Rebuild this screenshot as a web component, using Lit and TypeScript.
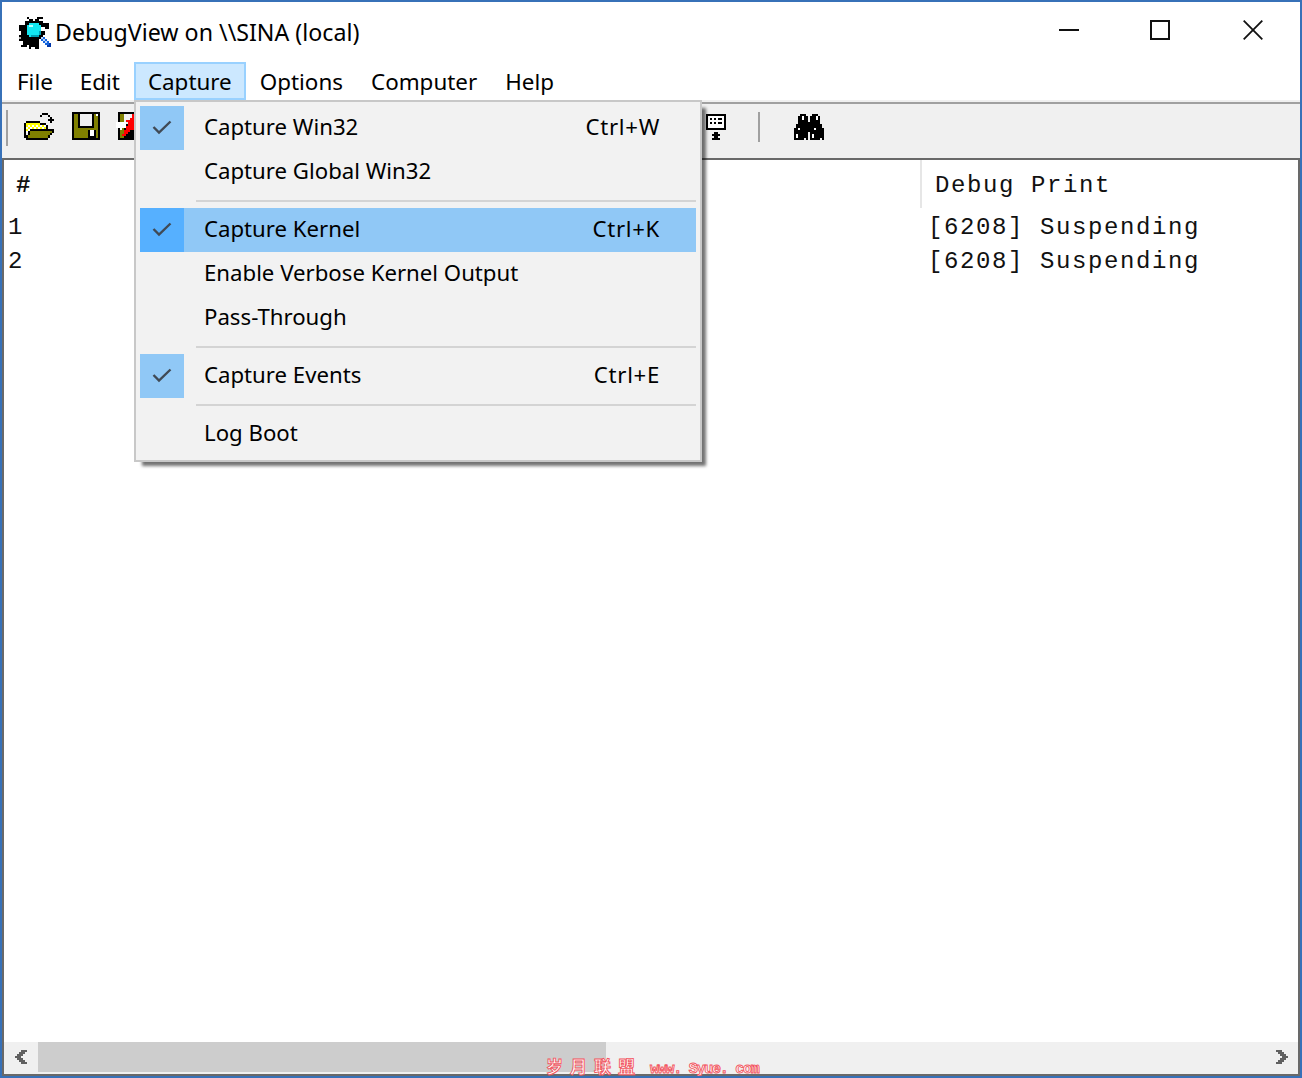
import { LitElement, html, css, svg } from "lit";
import { customElement } from "lit/decorators.js";

type Rect = [number, number, number, number, string];
const pixels = (w: number, h: number, rects: Rect[], cls: string) => html`<svg class=${cls} width=${w} height=${h} viewBox="0 0 ${w} ${h}" shape-rendering="crispEdges">${rects.map(
  ([x, y, rw, rh, f]) => svg`<rect x=${x} y=${y} width=${rw} height=${rh} fill=${f}></rect>`
)}</svg>`;

const K = "#000", O = "#808000", Y = "#ffff00", W = "#fff", C = "#12e6f0", B = "#1464dc", R = "#ff0000", G = "#b0b0b0", L = "#f0f0f0";

const bugIcon = pixels(32, 32, [
  [8,0,2,2,K],[10,2,4,4,K],[18,0,6,2,K],[16,2,4,4,K],[6,4,18,4,K],[22,6,8,4,K],[26,10,4,2,K],
  [0,8,10,6,K],[2,14,8,4,K],[0,18,10,6,K],[4,24,6,4,K],[2,28,6,2,K],[0,20,2,2,G],
  [8,16,16,6,K],[10,22,10,6,K],[12,28,6,2,K],[10,28,2,4,K],[16,28,4,4,K],[22,14,4,4,K],
  [10,6,10,2,C],[8,8,14,10,C],[10,18,10,2,C],[10,8,4,2,"#b0ffff"],[20,14,2,4,"#00a0b4"],[12,18,8,2,"#00a0b4"],
  [20,18,4,2,K],[22,20,2,2,"#b8d4ff"],[24,20,2,2,B],[24,22,2,2,"#b8d4ff"],[26,22,2,2,B],[22,22,2,2,B],[24,24,4,2,B],[26,24,2,2,"#b8d4ff"],[28,24,2,2,B],[26,26,4,2,B],[30,26,2,2,"#0036a8"],[28,28,4,2,"#0036a8"],
], "bug");

const folderIcon = pixels(30, 27, [
  [18,0,6,2,K],[16,2,2,2,K],[24,2,2,2,K],[26,4,2,4,K],[24,6,6,2,K],[26,8,2,2,K],
  [2,8,14,2,K],[16,10,6,2,K],[0,10,2,15,K],[22,12,2,4,K],[2,25,22,2,K],
  [2,10,14,2,Y],[16,12,6,2,W],[2,12,2,2,Y],[6,12,2,2,Y],[10,12,2,2,Y],[14,12,2,2,Y],[18,12,2,2,Y],[4,14,2,2,Y],[8,14,2,2,Y],[12,14,2,2,Y],[16,14,2,2,Y],[20,14,2,2,Y],[2,16,2,2,Y],[6,16,2,2,Y],
  [4,12,2,2,W],[8,12,2,2,W],[12,12,2,2,W],[2,14,2,2,W],[6,14,2,2,W],[10,14,2,2,W],[14,14,2,2,W],[18,14,2,2,W],[4,16,2,2,W],[2,18,2,2,W],
  [6,16,24,2,K],[4,18,2,2,K],[28,18,2,2,K],[4,20,2,2,K],[26,20,2,2,K],[2,22,2,3,K],[24,22,2,3,K],
  [6,18,22,2,O],[6,20,20,2,O],[4,22,20,3,O],
], "folder");

const saveIcon = pixels(28, 28, [
  [0,0,28,2,K],[0,26,28,2,K],[0,0,2,28,K],[26,0,2,28,K],
  [2,2,24,24,O],[6,2,16,12,L],[6,2,2,14,K],[20,2,2,14,K],[6,14,16,2,K],
  [24,2,2,2,W],[16,18,2,8,K],[18,18,4,6,W],[18,24,4,2,K],[22,18,2,8,K],
], "save");

const clearIcon = pixels(18, 28, [
  [2,0,16,2,K],[2,26,16,2,K],[2,0,2,28,K],[4,2,4,24,O],[8,2,10,10,L],[8,12,10,16,K],
  [0,10,10,6,W],[4,16,2,2,W],
  [16,2,2,4,R],[14,6,4,2,R],[10,8,2,2,R],[12,8,6,6,R],[10,14,8,4,R],[8,18,6,2,R],[8,20,4,2,R],[6,22,4,2,R],
], "clear");

const monitorIcon = pixels(20, 26, [
  [0,0,20,2,K],[0,14,20,2,K],[0,0,2,16,K],[18,0,2,16,K],[2,2,16,12,W],
  [4,4,2,2,K],[8,4,2,2,K],[12,4,4,2,K],[4,8,2,2,K],[8,8,2,2,K],[12,8,4,2,K],
  [8,18,4,2,K],[6,20,8,2,K],[8,22,4,2,K],[6,24,8,2,K],
], "monitor");

const binoIcon = pixels(30, 26, [
  [6,0,6,2,K],[18,0,6,2,K],[4,2,10,8,K],[16,2,10,8,K],[2,10,12,6,K],[16,10,12,6,K],[0,14,14,12,K],[16,14,14,12,K],[14,8,2,10,K],
  [8,2,2,4,W],[22,2,2,4,W],[4,14,2,2,W],[20,14,2,2,W],[2,20,2,4,W],[18,20,2,4,W],
  [10,24,2,2,L],[26,24,2,2,L],
], "bino");

const check = html`<svg class="check" width="20" height="16" viewBox="0 0 20 16"><path d="M1.5 8 L7 13.5 L18.5 2.5" fill="none" stroke="#404a55" stroke-width="2.4"></path></svg>`;

const chevL = pixels(12, 14, [
  [6,0,6,2,"#606060"],[4,2,6,2,"#606060"],[2,4,6,2,"#606060"],[0,6,6,2,"#606060"],[2,8,6,2,"#606060"],[4,10,6,2,"#606060"],[6,12,6,2,"#606060"],
], "chev");
const chevR = pixels(12, 14, [
  [0,0,6,2,"#606060"],[2,2,6,2,"#606060"],[4,4,6,2,"#606060"],[6,6,6,2,"#606060"],[4,8,6,2,"#606060"],[2,10,6,2,"#606060"],[0,12,6,2,"#606060"],
], "chev");

@customElement("app-root")
export class AppRoot extends LitElement {
  static styles = css`
    :host { display: block; width: 1302px; height: 1078px; font-family: "Noto Sans", "Liberation Sans", sans-serif; color: #000; }
    * { box-sizing: border-box; }
    .window { position: relative; width: 1302px; height: 1078px; border: 2px solid #3771b8; background: #fff; display: flex; flex-direction: column; overflow: hidden; }
    .titlebar { height: 60px; flex: none; display: flex; align-items: center; padding-left: 17px; }
    .bug { flex: none; margin-right: 4px; margin-top: 2px; }
    .title { font-size: 23.2px; flex: 1; white-space: nowrap; }
    .caption { display: flex; align-self: flex-start; margin-right: 1px; }
    .capbtn { width: 92px; height: 56px; display: flex; align-items: center; justify-content: center; }
    .capbtn.max { padding-right: 2px; }
    .menubar { height: 40px; flex: none; display: flex; background: #fff; border-bottom: 2px solid #f0f0f0; }
    .mitem { font-size: 22.4px; height: 38px; padding: 0 12px; display: flex; align-items: center; border: 2px solid transparent; white-space: nowrap; }
    .mitem:first-child { padding: 0 11px 0 13px; }
    .mitem.active { background: #cce8ff; border-color: #99d1ff; }
    .toolbar { height: 58px; flex: none; background: #f0f0f0; border-top: 2px solid #a0a0a0; border-bottom: 2px solid #696969; display: flex; align-items: center; padding-bottom: 10px; }
    .toolbar svg { flex: none; }
    .sep { width: 2px; height: 30px; background: #a0a0a0; flex: none; margin-top: 2px; }
    .sep.first { margin-left: 4px; height: 36px; margin-top: 4px; margin-right: 16px; }
    .folder { margin-right: 18px; margin-top: 1px; }
    .save { margin-right: 16px; }
    .monitor { margin-left: 572px; margin-right: 32px; margin-top: 2px; }
    .bino { margin-left: 34px; margin-top: 2px; }
    .list { flex: 1; border-left: 2px solid #696969; background: #fff; font-family: "Liberation Mono", "Courier New", monospace; font-size: 24px; letter-spacing: 1.6px; color: #111; min-height: 0; display: grid; grid-template-columns: 916px 1fr; grid-template-rows: 48px 34px 34px 1fr; }
    .hcell { display: flex; align-items: center; padding-top: 2px; }
    .hcell.num { padding-left: 12px; font-weight: bold; }
    .hcell.print { border-left: 2px solid #e6e6e6; padding-left: 13px; }
    .cell { display: flex; align-items: center; white-space: pre; padding-top: 5px; }
    .cell.n { padding-left: 4px; }
    .cell.txt { padding-left: 8px; }
    .scrollbar { height: 32px; flex: none; background: #f0f0f0; display: flex; border-left: 2px solid #696969; padding-bottom: 2px; }
    .sbtn { width: 34px; display: flex; align-items: center; justify-content: center; flex: none; }
    .sbtn.right { justify-content: flex-start; padding-left: 10px; }
    .thumb { width: 568px; background: #cdcdcd; flex: none; }
    .spacer { flex: 1; }
    .bottom { height: 2px; flex: none; background: #696969; }
    .rightedge { position: absolute; right: 0; top: 158px; bottom: 0; width: 2px; background: #696969; }
    .menu { position: absolute; left: 132px; top: 98px; width: 568px; height: 362px; background: #f2f2f2; border: 2px solid #c8c8c8; padding: 4px; box-shadow: 6px 6px 3px -2px rgba(0,0,0,.55); z-index: 5; font-size: 22.2px; }
    .row { height: 44px; display: grid; grid-template-columns: 44px 20px 1fr auto; align-items: center; }
    .row.hi { background: #90c8f6; }
    .mark { height: 44px; display: flex; align-items: center; justify-content: center; padding-bottom: 2px; }
    .mark.on { background: #90c8f6; }
    .row.hi .mark.on { background: #56b0ff; }
    .label { grid-column: 3; white-space: nowrap; padding-bottom: 4px; }
    .key { grid-column: 4; padding-right: 36px; white-space: nowrap; padding-bottom: 4px; letter-spacing: 0.7px; }
    .msep { height: 2px; background: #d4d4d4; margin: 6px 0 6px 56px; width: 500px; }
    .watermark { position: absolute; left: 544px; top: 1053px; z-index: 9; display: flex; align-items: baseline; font-family: "Noto Sans CJK SC", "DejaVu Serif", serif; color: #fff; -webkit-text-stroke: 0.9px #f25560; font-size: 17px; white-space: pre; line-height: 22px; }
    .watermark .cn { letter-spacing: 7px; width: 104px; font-weight: bold; }
    .watermark .en { font-family: "Liberation Mono", monospace; font-size: 15px; font-weight: bold; letter-spacing: -1.25px; }
  `;

  render() {
    return html`
      <div class="window">
        <div class="titlebar">
          ${bugIcon}
          <div class="title">DebugView on \\\\SINA (local)</div>
          <div class="caption">
            <div class="capbtn"><svg width="20" height="20" viewBox="0 0 20 20" shape-rendering="crispEdges"><rect y="9" width="20" height="2" fill="#111"></rect></svg></div>
            <div class="capbtn max"><svg width="20" height="20" viewBox="0 0 20 20" shape-rendering="crispEdges"><rect x="1" y="1" width="18" height="18" fill="none" stroke="#111" stroke-width="2"></rect></svg></div>
            <div class="capbtn"><svg width="20" height="20" viewBox="0 0 20 20"><path d="M0.7 0.7 L19.3 19.3 M19.3 0.7 L0.7 19.3" stroke="#111" stroke-width="1.8" fill="none"></path></svg></div>
          </div>
        </div>
        <div class="menubar">
          ${["File", "Edit", "Capture", "Options", "Computer", "Help"].map(
            (m) => html`<div class="mitem ${m === "Capture" ? "active" : ""}">${m}</div>`
          )}
        </div>
        <div class="toolbar">
          <div class="sep first"></div>
          ${folderIcon}${saveIcon}${clearIcon}
          ${monitorIcon}
          <div class="sep"></div>
          ${binoIcon}
        </div>
        <div class="list">
          <div class="hcell num">#</div>
          <div class="hcell print">Debug Print</div>
          <div class="cell n">1</div><div class="cell txt">[6208] Suspending</div>
          <div class="cell n">2</div><div class="cell txt">[6208] Suspending</div>
        </div>
        <div class="scrollbar">
          <div class="sbtn">${chevL}</div>
          <div class="thumb"></div>
          <div class="spacer"></div>
          <div class="sbtn right">${chevR}</div>
        </div>
        <div class="bottom"></div>
        <div class="rightedge"></div>
        <div class="menu">
          ${this.row("Capture Win32", "Ctrl+W", true)}
          ${this.row("Capture Global Win32", "", false)}
          <div class="msep"></div>
          ${this.row("Capture Kernel", "Ctrl+K", true, true)}
          ${this.row("Enable Verbose Kernel Output", "", false)}
          ${this.row("Pass-Through", "", false)}
          <div class="msep"></div>
          ${this.row("Capture Events", "Ctrl+E", true)}
          <div class="msep"></div>
          ${this.row("Log Boot", "", false)}
        </div>
        <div class="watermark"><span class="cn">岁月联盟</span><span class="en">www. Syue. com</span></div>
      </div>
    `;
  }

  private row(label: string, key: string, checked: boolean, hi = false) {
    return html`<div class="row ${hi ? "hi" : ""}">
      <div class="mark ${checked ? "on" : ""}">${checked ? check : ""}</div>
      <div class="label">${label}</div>
      <div class="key">${key}</div>
    </div>`;
  }
}
